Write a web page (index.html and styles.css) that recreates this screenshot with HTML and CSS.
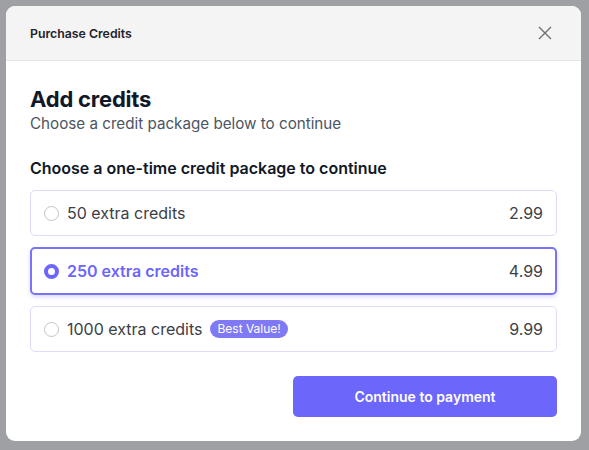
FILE: index.html
```html
<!DOCTYPE html>
<html lang="en">
<head>
    <meta charset="UTF-8">
    <meta name="viewport" content="width=device-width, initial-scale=1.0">
    <title>Purchase Credits</title>
    <link rel="stylesheet" href="styles.css">
</head>
<body>
    <div class="backdrop">
        <div class="modal">
            <div class="modal-header">
                <span class="modal-title">Purchase Credits</span>
                <span class="close">
                    <svg width="14" height="14" viewBox="0 0 14 14">
                        <path d="M1 1 L13 13 M13 1 L1 13" stroke="#6b6f76" stroke-width="1.4" fill="none"/>
                    </svg>
                </span>
            </div>
            <div class="modal-body">
                <h1>Add credits</h1>
                <p class="subtitle">Choose a credit package below to continue</p>
                <h2>Choose a one-time credit package to continue</h2>
                <div class="packages">
                    <label class="package">
                        <span class="radio"></span>
                        <span class="package-name">50 extra credits</span>
                        <span class="price">2.99</span>
                    </label>
                    <label class="package selected">
                        <span class="radio"></span>
                        <span class="package-name">250 extra credits</span>
                        <span class="price">4.99</span>
                    </label>
                    <label class="package">
                        <span class="radio"></span>
                        <span class="package-name">1000 extra credits</span>
                        <span class="badge">Best Value!</span>
                        <span class="price">9.99</span>
                    </label>
                </div>
                <div class="actions">
                    <button class="pay-button">Continue to payment</button>
                </div>
            </div>
        </div>
    </div>
</body>
</html>
```

FILE: styles.css
```css
body {
    margin: 0;
    font-family: Inter, "Noto Sans", sans-serif;
    background-color: #9fa0a3;
}
.backdrop {
    height: 450px;
    padding: 6px;
    box-sizing: border-box;
    background-color: #9fa0a3;
}
.modal {
    width: 575px;
    height: 435px;
    background-color: #fff;
    border-radius: 9px;
    overflow: hidden;
}
.modal-header {
    height: 54px;
    display: flex;
    align-items: center;
    justify-content: space-between;
    padding: 0 29px 0 24px;
    background-color: #f4f4f4;
    border-bottom: 1px solid #e4e4e4;
}
.modal-title {
    font-size: 12.3px;
    font-weight: 600;
    color: #1f2328;
}
.close {
    display: flex;
    cursor: pointer;
}
.modal-body {
    padding: 24px 24px 0 24px;
}
h1 {
    margin: 0;
    font-size: 22px;
    line-height: 28px;
    font-weight: 700;
    color: #111827;
    letter-spacing: -0.2px;
}
.subtitle {
    margin: 0;
    font-size: 15.2px;
    line-height: 22px;
    color: #4b5563;
}
h2 {
    margin: 22px 0 0 0;
    font-size: 16px;
    line-height: 22px;
    font-weight: 600;
    color: #111827;
}
.packages {
    display: flex;
    flex-direction: column;
    gap: 11px;
    margin-top: 11px;
}
.package {
    display: flex;
    align-items: center;
    height: 46px;
    padding: 0 13px;
    border: 1px solid #dcdcfb;
    border-radius: 5px;
    box-sizing: border-box;
    font-size: 16px;
    color: #3b4048;
    cursor: pointer;
}
.package.selected {
    height: 48px;
    border: 2px solid #7a73f7;
    padding: 0 12px;
    box-shadow: 0 2px 4px rgba(108, 102, 251, 0.25);
}
.radio {
    width: 13px;
    height: 13px;
    border: 1px solid #c4c4c8;
    border-radius: 50%;
    margin-right: 8px;
    background: #fff;
}
.selected .radio {
    width: 7px;
    height: 7px;
    border: 4px solid #6c66fb;
}
.selected .package-name {
    color: #6c66fb;
    font-weight: 600;
}
.badge {
    margin-left: 8px;
    padding: 1px 7px;
    background-color: #8079f6;
    color: #fff;
    font-size: 12px;
    line-height: 16px;
    border-radius: 9px;
}
.price {
    margin-left: auto;
}
.actions {
    display: flex;
    justify-content: flex-end;
    margin-top: 24px;
}
.pay-button {
    width: 264px;
    height: 41px;
    border: none;
    border-radius: 5px;
    background-color: #6c66fb;
    color: #fff;
    font-family: Inter, "Noto Sans", sans-serif;
    font-size: 14px;
    font-weight: 600;
    cursor: pointer;
}
```
